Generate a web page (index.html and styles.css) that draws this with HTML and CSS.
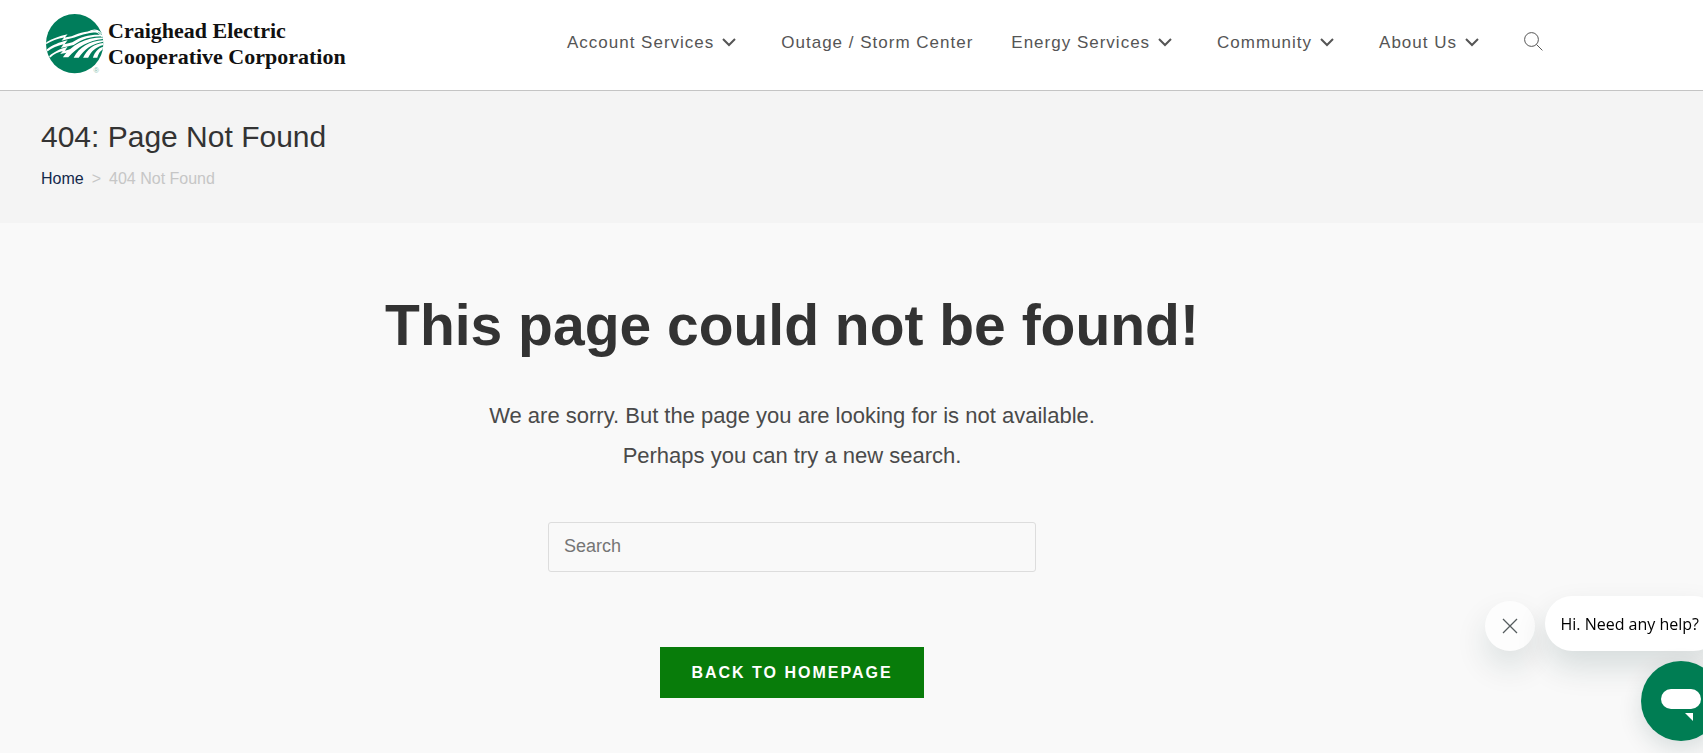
FILE: index.html
```html
<!DOCTYPE html>
<html lang="en">

<head>
    <meta charset="utf-8">
    <meta name="viewport" content="width=device-width, initial-scale=1">
    <title>404: Page Not Found</title>
    <link rel="stylesheet" href="styles.css">
</head>

<body>
    <header class="site-header">
        <div class="container header-inner">
            <a href="#" class="logo">
                <svg class="logo-mark" viewBox="0 0 172 178" aria-hidden="true">
                    <ellipse cx="85" cy="88" rx="85" ry="88" fill="#007d5b" />
                    <g fill="#fff">
                        <path d="M1 84C18 73 38 66 64 60L56 70L76 66C100 54 130 50 152 48L164 54C132 54 106 60 84 70L46 79L54 70C34 73 16 80 0 90z" />
                        <path d="M2 105C20 92 38 84 64 78L55 90L78 84C106 66 132 60 168 62L169 66C132 66 108 74 82 92L44 101L52 90C34 94 18 101 4 111z" />
                        <path d="M9 125C24 112 40 104 64 97L56 109L76 103C70 108 66 112 62 115L42 119L50 110C36 113 24 119 13 129z" />
                        <path d="M50 128C76 92 116 70 168 70L169 74C126 78 94 98 66 128z" />
                        <path d="M82 130C98 98 130 80 169 78L170 82C136 88 114 104 97 130z" />
                        <path d="M110 130C122 104 142 89 170 86L170 92C148 98 134 110 125 130z" />
                        <path d="M139 130C145 112 154 102 169 97L168 105C160 110 155 118 152 130z" />
                    </g>
                    <path fill="none" stroke="#fff" stroke-width="3" d="M122 56C138 44 154 46 165 60M138 52C150 50 158 56 167 68" />
                    <text x="141" y="175" class="logo-reg">®</text>
                </svg>
                <span class="logo-text">Craighead Electric<br>Cooperative Corporation</span>
            </a>
            <nav class="main-nav">
                <a href="#">Account Services <svg class="chevron" viewBox="0 0 14 9"><path d="M1 1l6 6 6-6" /></svg></a>
                <a href="#">Outage / Storm Center</a>
                <a href="#">Energy Services <svg class="chevron" viewBox="0 0 14 9"><path d="M1 1l6 6 6-6" /></svg></a>
                <a href="#">Community <svg class="chevron" viewBox="0 0 14 9"><path d="M1 1l6 6 6-6" /></svg></a>
                <a href="#">About Us <svg class="chevron" viewBox="0 0 14 9"><path d="M1 1l6 6 6-6" /></svg></a>
                <button type="button" class="search-toggle" aria-label="Search website">
                    <svg viewBox="0 0 19 19"><circle cx="7.5" cy="7.5" r="6.9" /><path d="M12.4 12.4l6 6" /></svg>
                </button>
            </nav>
        </div>
    </header>

    <section class="page-header">
        <div class="container">
            <h1>404: Page Not Found</h1>
            <nav class="breadcrumbs" aria-label="Breadcrumbs">
                <a href="#">Home</a>
                <span class="sep">&gt;</span>
                <span>404 Not Found</span>
            </nav>
        </div>
    </section>

    <main class="container error-content">
        <h2>This page could not be found!</h2>
        <p>We are sorry. But the page you are looking for is not available.<br>Perhaps you can try a new search.</p>
        <form class="search-form">
            <input type="search" placeholder="Search" aria-label="Search">
        </form>
        <a href="#" class="button">Back To Homepage</a>
    </main>

    <!-- Chat widget -->
    <aside class="chat">
        <div class="chat-row">
            <button type="button" class="chat-close" aria-label="Close message">
                <svg viewBox="0 0 14 14"><path d="M0 0l14 14M14 0L0 14" /></svg>
            </button>
            <button type="button" class="chat-message">Hi. Need any help?</button>
        </div>
        <button type="button" class="chat-button" aria-label="Open chat">
            <svg viewBox="0 0 40 32"><rect width="40" height="20" rx="10" /><path d="M24 24h8v8z" /></svg>
        </button>
    </aside>
</body>

</html>
```
FILE: styles.css
```css
* {
    box-sizing: border-box;
}

body {
    margin: 0;
    min-height: 100vh;
    font-family: "Liberation Sans", Arial, sans-serif;
    font-size: 16px;
    color: #4a4a4a;
    background-color: #f9f9f9;
    overflow-x: hidden;
}

a {
    text-decoration: none;
}

button {
    border: none;
    padding: 0;
    font: inherit;
    cursor: pointer;
}

.container {
    padding: 0 160px 0 41px;
}

/* Header */
.site-header {
    background-color: #fff;
    border-bottom: 1px solid #c4c4c4;
}

.header-inner {
    display: flex;
    justify-content: space-between;
    height: 90px;
}

.logo {
    display: flex;
    align-items: center;
    gap: 4px;
    padding-left: 5px;
    padding-bottom: 2px;
    color: #111;
}

.logo-mark {
    width: 58px;
    height: 60px;
}

.logo-reg {
    font-size: 22px;
    fill: #7fbead;
}

.logo-text {
    font-family: "Liberation Serif", "Times New Roman", serif;
    font-size: 22px;
    font-weight: bold;
    line-height: 26px;
    white-space: nowrap;
}

.main-nav {
    display: flex;
    align-items: center;
    gap: 38px;
    padding-bottom: 4px;
}

.main-nav a {
    display: flex;
    align-items: center;
    gap: 8px;
    font-size: 17px;
    letter-spacing: 1px;
    color: #555;
    white-space: nowrap;
}

.chevron {
    width: 14px;
    height: 9px;
    margin-right: 7px;
    margin-bottom: 2px;
    fill: none;
    stroke: #555;
    stroke-width: 2;
}

.search-toggle {
    padding-bottom: 4px;
    background: none;
}

.search-toggle svg {
    display: block;
    width: 19px;
    height: 19px;
    fill: none;
    stroke: #555;
}

/* Page title */
.page-header {
    padding: 28px 0 33px;
    background-color: #f4f4f4;
}

.page-header h1 {
    margin: 0 0 13px;
    font-size: 30px;
    font-weight: normal;
    line-height: 36px;
    color: #333;
}

.breadcrumbs {
    display: flex;
    gap: 8px;
    line-height: 22px;
    color: #c6c6c6;
}

.breadcrumbs a {
    color: #13294b;
}

/* 404 content */
.error-content {
    display: flex;
    flex-direction: column;
    align-items: center;
    padding-top: 67px;
    padding-bottom: 50px;
    text-align: center;
}

.error-content h2 {
    margin: 0;
    font-size: 57px;
    line-height: 70px;
    color: #333;
}

.error-content p {
    margin: 36px 0 46px;
    font-size: 22px;
    line-height: 40px;
}

.search-form {
    width: 100%;
    max-width: 488px;
    margin-bottom: 75px;
}

.search-form input {
    display: block;
    width: 100%;
    height: 50px;
    padding: 0 15px 2px;
    border: 1px solid #ddd;
    border-radius: 3px;
    font: inherit;
    font-size: 18px;
    color: #333;
    background: none;
}

.search-form input::placeholder {
    color: #757575;
}

.button {
    padding: 0 31px;
    font-size: 16px;
    font-weight: bold;
    line-height: 51px;
    letter-spacing: 2px;
    text-transform: uppercase;
    color: #fff;
    background-color: #087c0a;
}

/* Chat widget sits partly past the right edge */
.chat {
    position: fixed;
    right: -18px;
    bottom: 12px;
    display: flex;
    flex-direction: column;
    align-items: flex-end;
    gap: 10px;
    font-family: "Open Sans", "Segoe UI", sans-serif;
}

.chat-row {
    display: flex;
    align-items: flex-end;
    gap: 10px;
}

.chat-close {
    display: grid;
    place-items: center;
    width: 50px;
    height: 50px;
    border-radius: 50%;
    background-color: #fdfdfd;
    box-shadow: 0 16px 32px rgba(0, 50, 50, 0.12);
}

.chat-close svg {
    width: 14px;
    height: 14px;
    overflow: visible;
    stroke: #555c5e;
    stroke-width: 1.3;
}

.chat-message {
    height: 55px;
    padding: 0 22px 0 15px;
    border-radius: 28px;
    font-size: 16px;
    white-space: nowrap;
    color: #000;
    background-color: #fff;
    box-shadow: 0 16px 32px rgba(0, 50, 50, 0.14);
}

.chat-button {
    display: grid;
    place-items: center;
    width: 80px;
    height: 80px;
    padding-top: 8px;
    border-radius: 50%;
    background-color: #007d53;
    box-shadow: 0 8px 24px rgba(0, 50, 50, 0.14);
}

.chat-button svg {
    width: 40px;
    height: 32px;
    fill: #fff;
}
```
